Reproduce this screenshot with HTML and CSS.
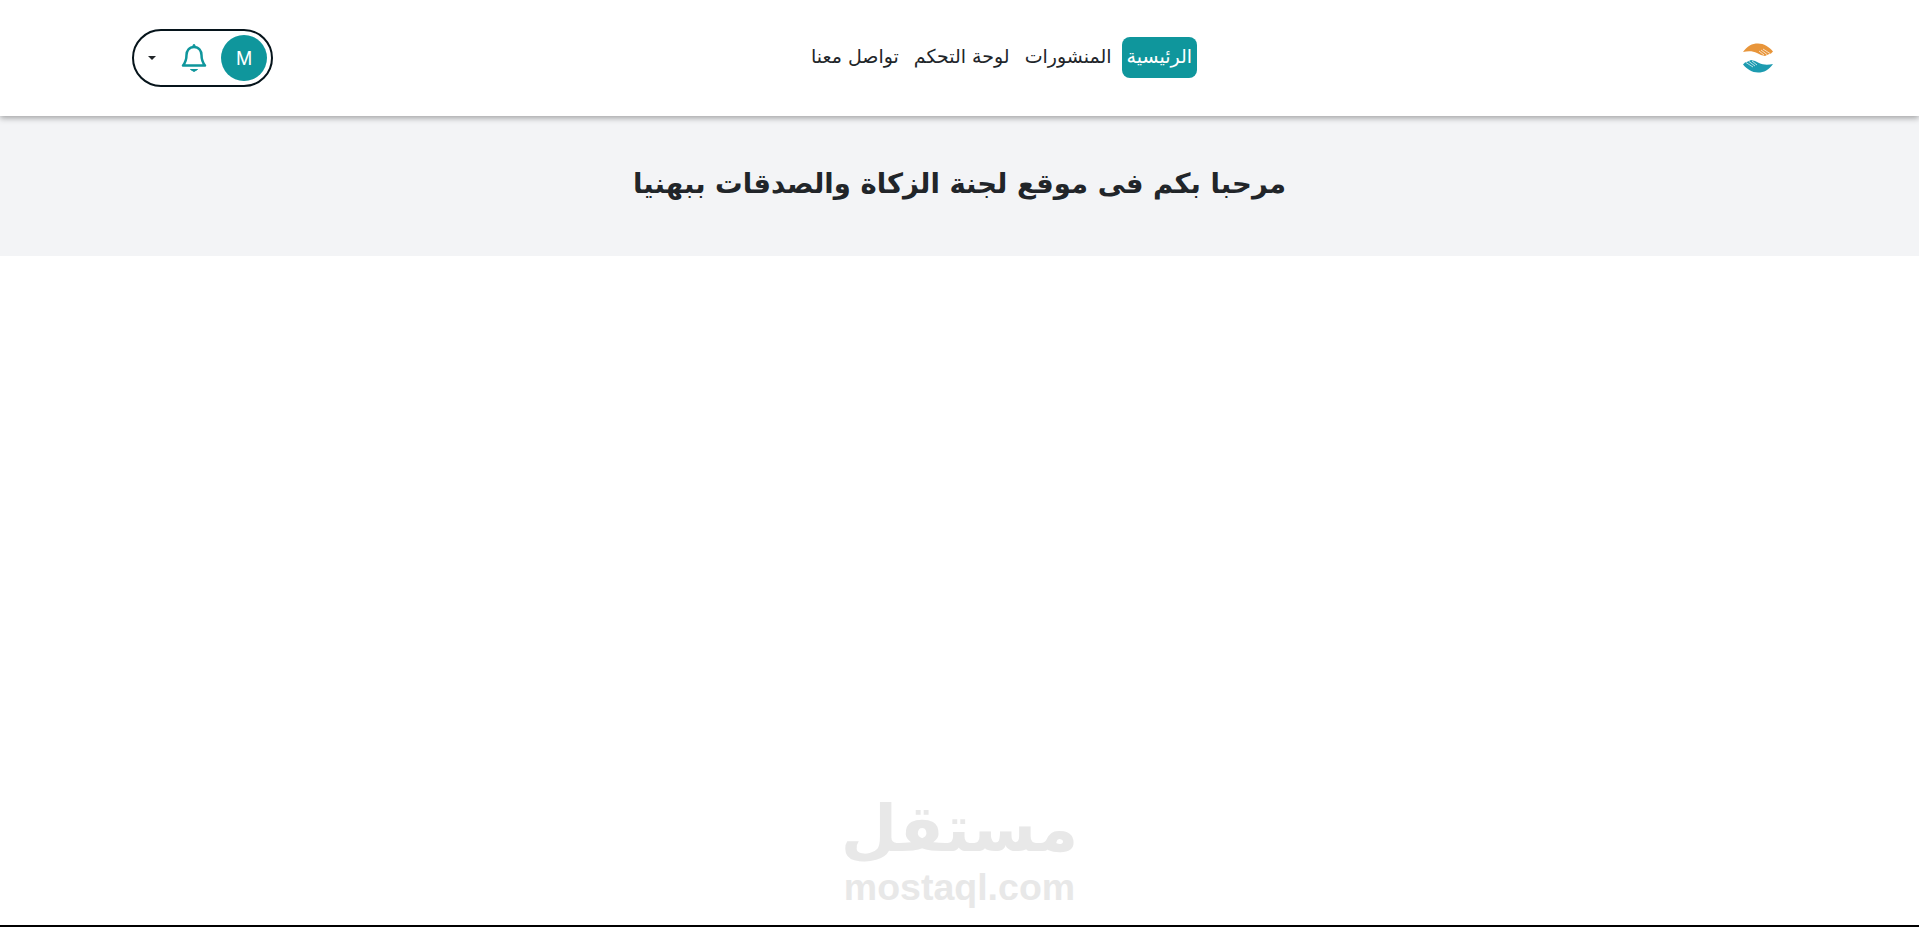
FILE: index.html
```html
<!DOCTYPE html>
<html lang="ar" dir="rtl">
<head>
  <meta charset="UTF-8">
  <meta name="viewport" content="width=device-width, initial-scale=1.0">
  <title>لجنة الزكاة والصدقات ببهنيا</title>
  <link rel="stylesheet" href="styles.css">
</head>
<body>
  <header class="navbar">
    <a class="logo" href="#">
      <svg width="30" height="30" viewBox="0 0 30 30">
        <g>
          <path fill="#e8953a" d="M0 9C4 3 9 .5 15 .5 21 .5 26 4 30 8.5L28 10.5 25 11.5 22 13 18 12 14 10C10 8 5 8 0 9z"/>
          <path stroke="#fff" stroke-width=".7" fill="none" d="M20 6L27 10.500M18 7L24 11.500M16 8L21 12"/>
        </g>
        <g transform="rotate(180 15 15)">
          <path fill="#1d9bb0" d="M0 9C4 3 9 .5 15 .5 21 .5 26 4 30 8.5L28 10.5 25 11.5 22 13 18 12 14 10C10 8 5 8 0 9z"/>
          <path stroke="#fff" stroke-width=".7" fill="none" d="M20 6L27 10.500M18 7L24 11.500M16 8L21 12"/>
        </g>
      </svg>
    </a>
    <nav class="nav-links">
      <a class="nav-link active" href="#">الرئيسية</a>
      <a class="nav-link" href="#">المنشورات</a>
      <a class="nav-link" href="#">لوحة التحكم</a>
      <a class="nav-link" href="#">تواصل معنا</a>
    </nav>
    <div class="account">
      <span class="avatar">M</span>
      <svg class="bell" width="26" height="30" viewBox="0 0 26 30" fill="none" stroke="#0f969c" stroke-width="2.5">
        <path d="M13 4c-5 0-7.500 4-7.500 8 0 6-1.500 8-3.500 10.500h22C22 20 20.500 18 20.500 12c0-4-2.500-8-7.500-8z" stroke-linejoin="round"/>
        <circle cx="13" cy="2.500" r="1" fill="#0f969c" stroke-width="1"/>
        <path d="M9.500 26.500h7L13 28.500z" fill="#0f969c" stroke-width="1"/>
      </svg>
      <span class="caret"></span>
    </div>
  </header>

  <section class="welcome">
    <h1>مرحبا بكم فى موقع لجنة الزكاة والصدقات ببهنيا</h1>
  </section>

  <!-- علامة الموقع أسفل الصفحة -->
  <div class="watermark">
    <span class="wm-ar">مستقل</span>
    <span class="wm-en">mostaql.com</span>
  </div>
</body>
</html>
```

FILE: styles.css
```css
* {
  box-sizing: border-box;
}
html, body {
  height: 100%;
}
body {
  margin: 0;
  font-family: "DejaVu Sans", "Noto Sans", sans-serif;
  color: #212529;
  background: #fff;
  border-bottom: 2px solid #000;
  overflow: hidden;
  position: relative;
}
.navbar {
  height: 116px;
  display: flex;
  align-items: center;
  justify-content: space-between;
  padding: 0 146px 0 132px;
  background: #fff;
  box-shadow: 0 2px 6px rgba(0, 0, 0, 0.35);
  position: relative;
}
.logo {
  display: flex;
  padding-left: 13px;
}
.nav-links {
  display: flex;
  align-items: center;
  gap: 5px;
  margin-bottom: 1px;
}
.nav-link {
  padding: 0 5px;
  height: 41px;
  line-height: 39px;
  font-size: 19px;
  color: #212529;
  text-decoration: none;
  border-radius: 8px;
}
.nav-link.active {
  background: #0f969c;
  color: #fff;
}
.account {
  width: 141px;
  height: 58px;
  display: flex;
  align-items: center;
  padding: 0 4px;
  border: 2px solid #06141b;
  border-radius: 29px;
}
.avatar {
  width: 46px;
  height: 46px;
  border-radius: 50%;
  background: #0f969c;
  color: #fff;
  font-family: "Inter", sans-serif;
  font-size: 18px;
  display: flex;
  align-items: center;
  justify-content: center;
}
.bell {
  margin-right: 14px;
}
.caret {
  margin-right: 25px;
  border-top: 4px solid #212529;
  border-left: 4px solid transparent;
  border-right: 4px solid transparent;
}
.welcome {
  height: 140px;
  background: #f3f4f6;
  display: flex;
  align-items: center;
  justify-content: center;
}
.welcome h1 {
  margin: 0 0 6px;
  font-size: 27.5px;
  font-weight: 700;
}
.watermark {
  position: absolute;
  bottom: 16px;
  left: 0;
  right: 0;
  display: flex;
  flex-direction: column;
  align-items: center;
  color: #e8e8e8;
  font-weight: 700;
  pointer-events: none;
}
.wm-ar {
  font-size: 65px;
  line-height: normal;
}
.wm-en {
  font-family: "Liberation Sans", sans-serif;
  font-size: 37.5px;
  line-height: normal;
}
```
